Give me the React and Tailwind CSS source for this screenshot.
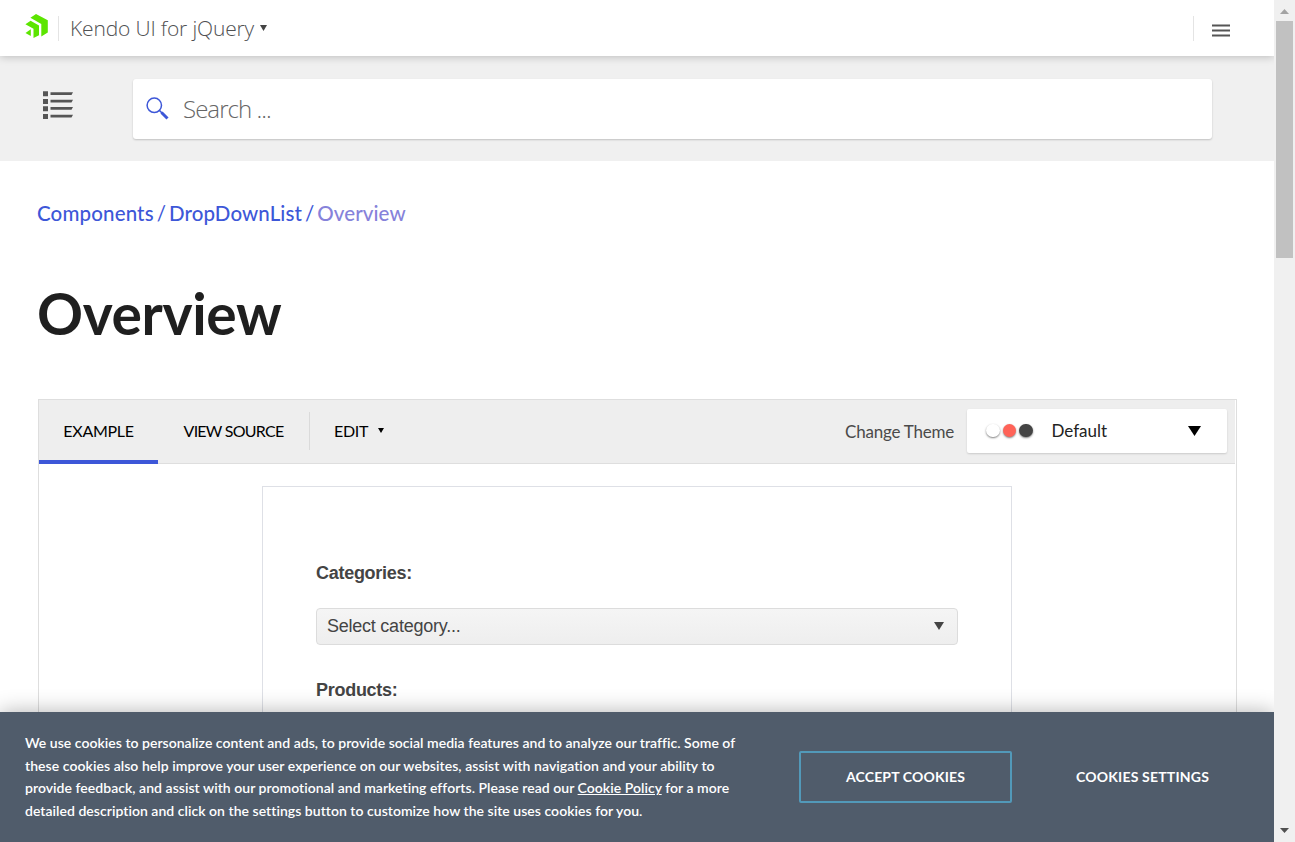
import React from "react";

function Caret({ w, h, className = "" }) {
  return (
    <svg width={w} height={h} viewBox="0 0 10 10" preserveAspectRatio="none" className={"shrink-0 " + className} fill="currentColor">
      <path d="M0 0H10L5 10Z" />
    </svg>
  );
}

function Logo() {
  return (
    <svg width="23" height="24" viewBox="0 0 23 24" fill="#5ce500" className="shrink-0">
      <path d="M11 0 22.8 6.2V18.6L16.3 22.4V10L5.4 3.7Z" />
      <path d="M5.6 6.8 14 11.5V21.2L8.5 24V14.8L.4 10.2Z" />
      <path d="M5.8 15.3V21.9L.5 19.1Z" />
    </svg>
  );
}

function Header() {
  return (
    <header className="relative z-10 flex h-14 shrink-0 items-center bg-white pl-[25px] pr-11 shadow-[0_1px_8px_rgba(0,0,0,0.22)]">
      <div className="pb-[4px]"><Logo /></div>
      <div className="ml-2.5 h-[25px] w-px bg-[#e4e4e4]" />
      <span className="ml-[11px] mt-0.5 whitespace-nowrap font-['Open_Sans',sans-serif] text-[21px] font-light tracking-[-0.16px] text-[#505153]">Kendo UI for jQuery</span>
      <Caret w={7} h={6} className="ml-1.5 text-[#444]" />
      <div className="ml-auto h-[25px] w-px bg-[#e4e4e4]" />
      <svg width="18" height="13" viewBox="0 0 18 13" className="ml-[18px] mt-1">
        <path d="M0 1.5H18M0 6.5H18M0 11.5H18" stroke="#555" strokeWidth="2" />
      </svg>
    </header>
  );
}

function SearchBar() {
  return (
    <div className="flex h-[105px] shrink-0 items-start bg-[#f0f0f0] pl-[43px] pt-[23px]">
      <svg width="30" height="28" viewBox="0 0 30 28" fill="#555" className="mt-3">
        <path d="M0 .2h5v5H0zM0 8h5v5H0zM0 15.2h5v5H0zM0 23h5v5H0z" />
        <path d="M7.5 1.3H30L28.5 4H7.5zM7.5 8.8H30L28.5 11.5H7.5zM7.5 16.1H30L28.5 18.8H7.5zM7.5 23.8H30L28.5 26.5H7.5z" />
      </svg>
      <div className="ml-[60px] flex h-[60px] w-[1079px] items-center rounded-[3px] bg-white pl-[13px] shadow-[0_1px_2px_rgba(0,0,0,0.2)]">
        <svg width="23" height="23" viewBox="0 0 23 23" fill="none" stroke="#3d57d8" className="-mt-0.5">
          <circle cx="8.3" cy="8.3" r="7.2" strokeWidth="1.5" />
          <path d="M13.5 13.5 16 16" strokeWidth="1.6" />
          <path d="M15.5 15.5 21.5 21.5" strokeWidth="3" />
        </svg>
        <span className="ml-[14px] font-['Open_Sans',sans-serif] text-[24px] font-light tracking-[-0.95px] text-[#666]">Search ...</span>
      </div>
    </div>
  );
}

function Toolbar() {
  return (
    <div className="mr-px flex h-16 border-b border-[#dedede] bg-[#eee] font-['Lato',sans-serif] text-[16px] text-black">
      <div className="-mb-px flex w-[119px] items-center justify-center border-b-4 border-[#3d57d8] pt-0.5">
        <span className="tracking-[-0.3px]">EXAMPLE</span>
      </div>
      <div className="flex w-[151px] items-center justify-center">
        <span className="-mt-0.5 whitespace-nowrap tracking-[-0.75px]">VIEW SOURCE</span>
      </div>
      <div className="mt-3 h-[38px] w-px bg-[#dadada]" />
      <div className="flex items-center pb-0.5 pl-6">
        <span className="tracking-[-0.3px]">EDIT</span>
        <Caret w={6} h={5} className="ml-[10px]" />
      </div>
      <div className="ml-auto flex items-center pr-2">
        <span className="mr-[13px] whitespace-nowrap text-[17px] tracking-[-0.22px] text-[#4a4a4a]">Change Theme</span>
        <div className="-mt-px flex h-11 w-[260px] items-center rounded-[2px] bg-white pl-[19px] shadow-[0_1px_2px_rgba(0,0,0,0.15)]">
          <div className="-mt-px flex gap-[3px]">
            <i className="size-[13.5px] rounded-full bg-white shadow-[0_1px_2px_rgba(0,0,0,0.5)]" />
            <i className="size-[13.5px] rounded-full bg-[#ff6358] shadow-[0_1px_2px_rgba(0,0,0,0.5)]" />
            <i className="size-[13.5px] rounded-full bg-[#444] shadow-[0_1px_2px_rgba(0,0,0,0.5)]" />
          </div>
          <span className="ml-[19px] text-[17px] text-[#222]">Default</span>
          <Caret w={13} h={10} className="ml-auto mr-[26px]" />
        </div>
      </div>
    </div>
  );
}

function Demo() {
  return (
    <div className="ml-[223px] mt-[22px] h-[400px] w-[750px] border border-[#dee0e6] px-[53px] pt-[74px] font-['Liberation_Sans',Arial,sans-serif] text-[18px] leading-6 text-[#444]">
      <div className="font-bold tracking-[-0.28px]">Categories:</div>
      <div className="mt-[23px] flex h-[37px] items-center rounded-[4px] border border-[#dcdcdc] bg-linear-to-b from-[#f5f5f5] to-[#eee] pl-[10px] pr-[13px]">
        <span className="-mt-0.5 tracking-[-0.24px]">Select category...</span>
        <Caret w={10} h={8} className="-mt-0.5 ml-auto" />
      </div>
      <div className="mt-[33px] font-bold tracking-[-0.28px]">Products:</div>
    </div>
  );
}

function CookieBar() {
  return (
    <div className="relative z-10 flex h-[130px] shrink-0 bg-[#505c6b] font-['Lato',sans-serif] text-white shadow-[0_0_20px_rgba(0,0,0,0.3)]">
      <div className="ml-[25px] w-[774px] whitespace-nowrap pt-5 text-[14px] font-semibold leading-[22.67px]">
        <div className="tracking-[0.028px]">We use cookies to personalize content and ads, to provide social media features and to analyze our traffic. Some of</div>
        <div className="tracking-[0.058px]">these cookies also help improve your user experience on our websites, assist with navigation and your ability to</div>
        <div className="tracking-[0.04px]">provide feedback, and assist with our promotional and marketing efforts. Please read our <span className="underline">Cookie Policy</span> for a more</div>
        <div className="tracking-[0.035px]">detailed description and click on the settings button to customize how the site uses cookies for you.</div>
      </div>
      <div className="mt-[39px] flex h-[52px] w-[213px] items-center justify-center rounded-[2px] border-2 border-[#5299b9] pb-0.5 text-[14px] font-bold">
        <span className="tracking-[0.14px]">ACCEPT COOKIES</span>
      </div>
      <div className="mt-[39px] flex h-[52px] w-[261px] items-center justify-center pb-0.5 text-[14px] font-bold">
        <span className="tracking-[0.2px]">COOKIES SETTINGS</span>
      </div>
    </div>
  );
}

function Scrollbar() {
  return (
    <div className="flex w-[21px] shrink-0 flex-col items-center bg-[#f0f0f0]">
      <Caret w={9} h={5} className="mt-[9px] rotate-180 text-[#a3a3a3]" />
      <div className="mt-[7px] h-[237px] w-[17px] shrink-0 bg-[#c1c1c1]" />
      <Caret w={9} h={5} className="mb-[9px] mt-auto text-[#505050]" />
    </div>
  );
}

export default function App() {
  return (
    <div className="flex h-[842px] w-[1295px] overflow-hidden bg-white">
      <div className="flex h-full w-[1274px] flex-col overflow-hidden">
        <Header />
        <SearchBar />
        <main className="min-h-0 flex-1 overflow-hidden px-[38px] pr-[37px]">
          <nav className="-ml-px mt-[37px] flex h-[30px] items-center whitespace-nowrap font-['Lato',sans-serif] text-[20.5px] font-medium text-[#3d57d8]">
            <span className="tracking-[0.15px]">Components</span>
            <span className="mx-[3px] font-normal">/</span>
            <span className="tracking-[0.1px]">DropDownList</span>
            <span className="mx-[3px] font-normal">/</span>
            <span className="tracking-[0.1px] text-[#8682da]">Overview</span>
          </nav>
          <h1 className="-ml-px mt-[50px] h-[70px] font-['Lato',sans-serif] text-[57px] font-bold leading-[70px] tracking-[-0.35px] text-[#1f1f1f]">Overview</h1>
          <section className="mt-[51px] border border-b-0 border-[#dedede]">
            <Toolbar />
            <Demo />
          </section>
        </main>
        <CookieBar />
      </div>
      <Scrollbar />
    </div>
  );
}
